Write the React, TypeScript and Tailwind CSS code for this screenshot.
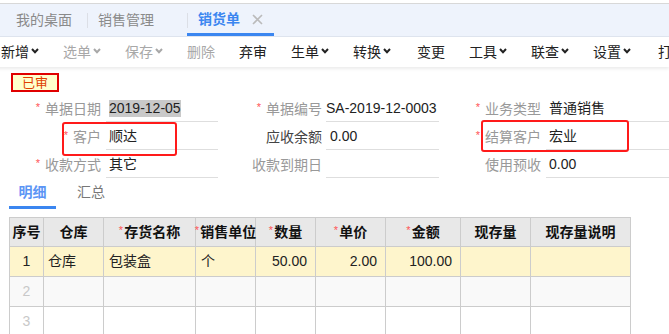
import React from "react";

const font = { fontFamily: '"Liberation Sans", "Noto Sans CJK SC", sans-serif' };

function Chevron() {
  return (
    <svg width="8" height="6" viewBox="0 0 8 6" className="ml-[2px] mb-[3px]">
      <polyline points="1,1 4,4.2 7,1" fill="none" stroke="currentColor" strokeWidth="2" />
    </svg>
  );
}

function Sep() {
  return <span className="w-px h-[15px] bg-[#dcdcdc]" />;
}

function Tool({ label, drop, muted }: { label: string; drop?: boolean; muted?: boolean }) {
  return (
    <span className={`flex items-center px-3 ${muted ? "text-[#a8a8a8]" : "text-[#222]"}`}>
      {label}
      {drop && <Chevron />}
    </span>
  );
}

function Label({ text, req, dark, w }: { text: string; req?: boolean; dark?: boolean; w: string }) {
  return (
    <div className={`${w} shrink-0 flex justify-end items-center ${dark ? "text-[#444]" : "text-[#999]"}`}>
      {req && <span className="text-[#f55] text-[11px] mr-[5px] mb-[3px]">*</span>}
      {text}
    </div>
  );
}

const cols = ["w-[34px]", "w-[60px]", "w-[92px]", "w-[60px]", "w-[60px]", "w-[70px]", "w-[75px]", "w-[70px]", "w-[100px]"];

export default function App() {
  const headers: { t: string; req?: boolean }[] = [
    { t: "序号" },
    { t: "仓库" },
    { t: "存货名称", req: true },
    { t: "销售单位", req: true },
    { t: "数量", req: true },
    { t: "单价", req: true },
    { t: "金额", req: true },
    { t: "现存量" },
    { t: "现存量说明" },
  ];

  return (
    <div className="w-[669px] h-[334px] overflow-hidden bg-white relative text-[14px]" style={font}>
      <div className="h-[3px]" />
      {/* top tabs */}
      <div className="h-[34px] border-t border-b border-t-[#d8d8d8] border-b-[#dfe5ef] bg-[#eef3fc] flex items-stretch">
        <span className="flex items-center pl-4 pr-[15px] text-[#8a8a8a]">我的桌面</span>
        <span className="self-center w-px h-[15px] bg-[#dcdfe6]" />
        <span className="flex items-center pl-[10px] pr-[33px] text-[#8a8a8a]">销售管理</span>
        <span className="self-center w-px h-[15px] bg-[#dcdfe6] -mr-px" />
        <div className="w-[87px] border-b-[3px] border-[#3b86f0] flex items-center pl-[11px] pt-[2px]">
          <span className="text-[#3b86f0] font-bold">销货单</span>
          <svg width="11" height="11" viewBox="0 0 11 11" className="ml-[12px]">
            <path d="M1 1 L10 10 M10 1 L1 10" stroke="#bbb" strokeWidth="1.6" />
          </svg>
        </div>
      </div>
      {/* toolbar */}
      <div className="h-[30px] flex items-center -ml-[11px] whitespace-nowrap shadow-[0_2px_3px_rgba(0,0,0,0.08)] relative">
        <Tool label="新增" drop />
        <Tool label="选单" drop muted />
        <Tool label="保存" drop muted />
        <Tool label="删除" muted />
        <Sep />
        <Tool label="弃审" />
        <Sep />
        <Tool label="生单" drop />
        <Tool label="转换" drop />
        <span className="ml-[2px]" />
        <Sep />
        <Tool label="变更" />
        <Sep />
        <Tool label="工具" drop />
        <Tool label="联查" drop />
        <Tool label="设置" drop />
        <span className="ml-[3px]" />
        <Sep />
        <Tool label="打印" drop />
      </div>

      {/* status */}
      <div className="pt-[6px] pl-[11px]">
        <div className="w-[48px] h-[19px] border-2 border-[#e00000] bg-[#ffffcc] text-[#e04000] text-[13px] leading-[15px] flex justify-center items-center">
          已审
        </div>
      </div>

      {/* form */}
      <div className="mt-[2px] text-[14px]">
        <div className="flex h-[28px] pt-[2px]">
          <Label text="单据日期" req w="w-[101px]" />
          <div className="ml-[5px] w-[112px] border-b border-[#dedede] flex items-center pl-[3px]">
            <span className="bg-[#c9c9c9] text-[#222] leading-[17px] px-0">2019-12-05</span>
          </div>
          <Label text="单据编号" req w="w-[104px]" />
          <div className="ml-[4px] w-[113px] border-b border-[#dedede] flex items-center text-[#222]">SA-2019-12-0003</div>
          <Label text="业务类型" req w="w-[102px]" />
          <div className="ml-[5px] flex-1 border-b border-[#dedede] flex items-center pl-[3px] text-[#222]">普通销售</div>
        </div>
        <div className="flex h-[28px] pt-[2px]">
          <Label text="客户" req w="w-[101px]" />
          <div className="ml-[5px] w-[112px] border-b border-[#dedede] flex items-center pl-[3px] text-[#222]">顺达</div>
          <Label text="应收余额" dark w="w-[104px]" />
          <div className="ml-[4px] w-[113px] border-b border-[#dedede] flex items-center pl-[4px] text-[#222]">0.00</div>
          <Label text="结算客户" req w="w-[102px]" />
          <div className="ml-[5px] flex-1 border-b border-[#dedede] flex items-center pl-[3px] text-[#222]">宏业</div>
        </div>
        <div className="flex h-[28px] pt-[2px]">
          <Label text="收款方式" req w="w-[101px]" />
          <div className="ml-[5px] w-[112px] border-b border-[#dedede] flex items-center pl-[3px] text-[#222]">其它</div>
          <Label text="收款到期日" w="w-[104px]" />
          <div className="ml-[4px] w-[113px] border-b border-[#dedede]" />
          <Label text="使用预收" w="w-[102px]" />
          <div className="ml-[5px] flex-1 border-b border-[#dedede] flex items-center pl-[3px] text-[#222]">0.00</div>
        </div>
      </div>

      {/* detail tabs */}
      <div className="flex h-[31px] pl-[9px]">
        <div className="w-[47px] border-b-[3px] border-[#3b86f0] flex items-center justify-center text-[#5b95f5] font-bold">明细</div>
        <div className="ml-[21px] flex items-center text-[#777] pb-[3px]">汇总</div>
      </div>

      {/* table */}
      <div className="mt-[8px] ml-[9px] border-l border-t border-[#cccccc] w-max">
        <div className="flex h-[29px] bg-[#e8e8e8]">
          {headers.map((h, i) => (
            <div key={i} className={`${cols[i]} border-r border-b border-[#cccccc] flex items-center justify-center font-bold text-[#111] whitespace-nowrap`}>
              {h.req && <span className="text-[#f55] font-normal text-[11px] mr-px mb-[4px]">*</span>}
              {h.t}
            </div>
          ))}
        </div>
        <div className="flex h-[30px] bg-[#fef5cc] text-[#222]">
          <div className={`${cols[0]} border-r border-b border-[#cccccc] flex items-center justify-center`}>1</div>
          <div className={`${cols[1]} border-r border-b border-[#cccccc] flex items-center pl-[4px]`}>仓库</div>
          <div className={`${cols[2]} border-r border-b border-[#cccccc] flex items-center pl-[5px]`}>包装盒</div>
          <div className={`${cols[3]} border-r border-b border-[#cccccc] flex items-center pl-[5px]`}>个</div>
          <div className={`${cols[4]} border-r border-b border-[#cccccc] flex items-center justify-end pr-[8px]`}>50.00</div>
          <div className={`${cols[5]} border-r border-b border-[#cccccc] flex items-center justify-end pr-[8px]`}>2.00</div>
          <div className={`${cols[6]} border-r border-b border-[#cccccc] flex items-center justify-end pr-[8px]`}>100.00</div>
          <div className={`${cols[7]} border-r border-b border-[#cccccc]`} />
          <div className={`${cols[8]} border-r border-b border-[#cccccc]`} />
        </div>
        {["2", "3"].map((n) => (
          <div key={n} className={`flex h-[30px] ${n === "2" ? "bg-[#f9f9f9]" : "bg-white"}`}>
            {cols.map((c, i) => (
              <div key={i} className={`${c} border-r border-b border-[#cccccc] flex items-center justify-center text-[#c8c8c8]`}>
                {i === 0 ? n : ""}
              </div>
            ))}
          </div>
        ))}
      </div>

      {/* annotation boxes */}
      <div className="absolute left-[62px] top-[122px] w-[115px] h-[34px] border-2 border-[#ff1a1a] rounded-[3px]" />
      <div className="absolute left-[481px] top-[120px] w-[148px] h-[32px] border-2 border-[#ff1a1a] rounded-[3px]" />
    </div>
  );
}
